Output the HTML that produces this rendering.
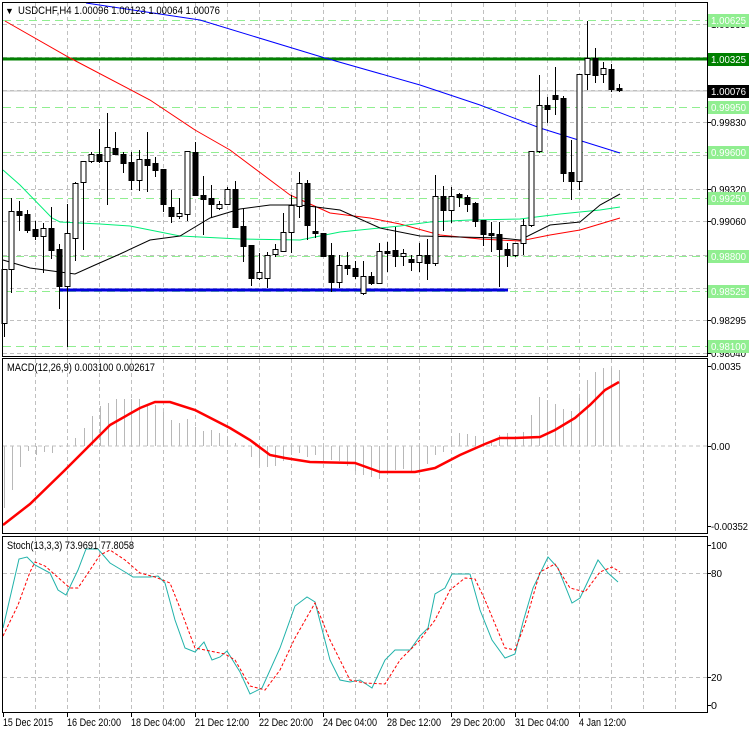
<!DOCTYPE html>
<html><head><meta charset="utf-8"><style>
html,body{margin:0;padding:0;background:#fff;}
svg{display:block;font-family:"Liberation Sans",sans-serif;}
</style></head><body>
<svg id="s" width="749" height="732" viewBox="0 0 749 732" xmlns="http://www.w3.org/2000/svg">
<rect width="749" height="732" fill="#fff"/>
<g id="grid" stroke="#c0c0c0" stroke-width="1" stroke-dasharray="4,3"></g>
<g id="green" stroke="#90ee90" stroke-width="1" stroke-dasharray="8,5"></g>
<line x1="3" y1="59" x2="707" y2="59" stroke="#008000" stroke-width="3"/>
<line x1="3" y1="91" x2="707" y2="91" stroke="#c0c0c0" stroke-width="1"/>
<line x1="60" y1="290" x2="508" y2="290" stroke="#0000dd" stroke-width="3"/>
<g fill="none" stroke-width="1">
<polyline stroke="#0000ff" points="86,3 200,20 325,58 420,85 480,105 540,128 620,153"/>
<polyline stroke="#ff0000" points="5,21 70,58 150,100 195,130 230,150 290,195 310,204 330,213 370,218 400,224 440,235 480,239 520,241 550,235 580,230 620,218"/>
<polyline stroke="#00ee77" points="3,170 20,185 52,218 60,222 100,224 130,226 180,236 240,239 300,240 340,232 400,226 430,222 470,220 520,219 560,214 600,210 620,207"/>
<polyline stroke="#000" points="3,260 30,268 60,272 75,274 95,265 120,254 150,240 180,236 210,218 240,209 270,205 300,205 340,210 380,228 420,236 460,237 500,238 520,240 550,225 580,222 600,205 620,194"/>
</g>
<g id="candles"></g>
<g id="hist" stroke="#b8b8b8" stroke-width="1"></g>
<line x1="3" y1="446" x2="707" y2="446" stroke="#c0c0c0" stroke-dasharray="4,3"/>
<polyline fill="none" stroke="#ff0000" stroke-width="2.5" points="3,525 30,504 65,470 90,445 110,425 140,408 155,402 170,402 195,410 230,428 250,440 270,455 285,458 310,462 355,463 380,472 415,472 435,468 460,455 485,444 500,438 515,438 540,437 555,430 575,418 590,405 605,390 619,382"/>
<polyline fill="none" stroke="#20b2aa" stroke-width="1" points="3,628 19,559 27,557 35,565 50,573 58,590 66,595 78,570 86,549 98,549 110,563 125,572 133,577 150,577 158,576 165,583 175,620 185,648 195,652 204,642 212,660 220,657 227,651 240,672 250,694 262,688 280,648 295,606 307,597 315,602 330,660 340,680 350,682 360,680 372,688 385,660 395,650 410,650 420,636 428,628 435,594 445,588 452,574 470,574 480,610 492,640 505,658 515,654 523,622 533,588 548,557 558,568 572,603 580,598 598,560 608,573 618,582"/>
<polyline fill="none" stroke="#ff0000" stroke-width="1" stroke-dasharray="3,2" points="3,636 18,605 30,572 35,562 45,566 70,588 78,588 100,555 110,550 125,560 140,573 155,577 170,583 180,608 195,648 205,650 225,654 235,660 250,686 265,690 280,670 295,638 315,603 330,640 350,680 365,683 385,684 400,660 420,640 435,620 450,590 465,578 475,579 485,600 505,648 515,650 525,624 540,572 555,564 570,588 585,592 600,572 612,567 620,572"/>
<g fill="none" stroke="#000" stroke-width="1">
<rect x="2.5" y="2.5" width="705" height="354"/>
<rect x="2.5" y="358.5" width="705" height="175"/>
<rect x="2.5" y="536.5" width="705" height="176"/>
</g>
<g id="labels" font-size="10.5"></g>
<g font-size="11" fill="#000">
<text x="5" y="14" font-size="9">▼</text>
<text x="18" y="14" textLength="202" lengthAdjust="spacingAndGlyphs">USDCHF,H4  1.00096 1.00123 1.00064 1.00076</text>
<text x="7" y="371" textLength="148" lengthAdjust="spacingAndGlyphs">MACD(12,26,9) 0.003100 0.002617</text>
<text x="7" y="549" textLength="127" lengthAdjust="spacingAndGlyphs">Stoch(13,3,3) 73.9691 77.8058</text>
</g>
<g font-size="11" fill="#000" id="bottom"></g>
</svg>
<script>
var NS="http://www.w3.org/2000/svg";
function el(p,t,a,txt){var e=document.createElementNS(NS,t);for(var k in a)e.setAttribute(k,a[k]);if(txt!=null)e.textContent=txt;document.getElementById(p).appendChild(e);return e;}
for(var x=35.5;x<707;x+=32){el('grid','line',{x1:x,y1:3,x2:x,y2:356});el('grid','line',{x1:x,y1:359,x2:x,y2:533});el('grid','line',{x1:x,y1:537,x2:x,y2:712});}
[24,57,90,122,155,189,221,255,288,320,353].forEach(function(y){el('grid','line',{x1:3,y1:y+.5,x2:707,y2:y+.5});});
[573,677].forEach(function(y){el('grid','line',{x1:3,y1:y+.5,x2:707,y2:y+.5});});
[20,107,152,198,256,291,346].forEach(function(y){el('green','line',{x1:3,y1:y+.5,x2:707,y2:y+.5});});
var C=[[4,'w',269,323,269,337],[11,'w',211,269,198,293],[19,'b',211,215,201,231],[27,'b',214,230,210,233],[35,'b',229,236,221,240],[43,'w',228,236,223,273],[51,'b',228,250,207,259],[59,'b',249,286,244,309],[67,'w',233,286,204,347],[75,'w',183,238,182,261],[83,'w',161,182,161,250],[91,'w',154,161,152,163],[99,'b',154,161,129,163],[107,'w',147,161,113,205],[115,'b',148,154,132,154],[123,'b',154,163,152,173],[131,'b',162,180,152,190],[139,'w',159,180,150,191],[147,'b',159,165,132,192],[155,'b',163,170,157,177],[163,'b',169,204,169,212],[171,'b',207,216,190,223],[179,'w',213,216,198,219],[187,'w',151,214,151,221],[195,'b',152,195,142,195],[203,'b',195,199,176,235],[211,'b',198,204,185,218],[219,'w',204,208,201,210],[227,'w',189,204,187,205],[235,'b',189,227,181,227],[243,'b',226,246,208,262],[251,'b',245,278,245,286],[259,'w',272,278,253,280],[267,'w',255,278,252,288],[275,'w',249,254,244,257],[283,'w',232,251,213,252],[291,'w',205,232,195,253],[299,'w',183,206,172,218],[307,'b',183,225,180,240],[315,'b',231,233,206,238],[323,'b',233,256,233,257],[331,'b',255,282,243,292],[339,'w',265,282,255,288],[347,'b',265,268,252,275],[355,'b',268,276,261,279],[363,'w',276,293,261,295],[371,'b',276,283,272,285],[379,'w',251,283,243,283],[387,'b',251,252,242,272],[395,'b',250,256,227,267],[403,'w',253,256,249,266],[411,'b',259,262,255,271],[419,'w',255,262,243,272],[427,'b',255,263,239,280],[435,'w',196,263,175,266],[443,'b',196,210,186,231],[451,'w',196,210,187,223],[459,'b',194,197,193,207],[467,'b',197,204,195,212],[475,'b',203,221,202,227],[483,'b',220,234,220,246],[491,'b',233,235,222,252],[499,'b',234,249,222,287],[507,'b',249,255,243,267],[515,'w',243,255,243,257],[523,'w',225,243,219,255],[531,'w',151,225,151,227],[539,'w',105,151,75,153],[547,'b',105,109,97,123],[555,'b',95,99,67,115],[563,'b',98,173,96,182],[571,'b',172,181,140,200],[579,'w',74,181,74,190],[587,'w',58,74,21,90],[595,'b',58,75,48,83],[603,'w',68,74,62,83],[611,'b',69,89,64,92],[619,'b',88,90,84,92]];
C.forEach(function(c){var x=c[0]+.5;el('candles','line',{x1:x,y1:c[4],x2:x,y2:c[5],stroke:'#000'});var h=Math.max(c[3]-c[2],2);el('candles','rect',{x:c[0]-2,y:c[2]+.5,width:5,height:h,fill:c[1]=='w'?'#fff':'#000',stroke:'#000'});});
var H=[[4,508],[12,490],[20,467],[28,451],[36,455],[44,452],[52,453],[60,447],[67,444],[75,438],[84,428],[92,416],[100,406],[108,403],[116,399],[124,399],[131,399],[139,399],[147,404],[155,405],[163,412],[171,420],[179,423],[187,419],[195,427],[203,431],[211,430],[219,433],[227,437],[235,443],[243,447],[251,457],[259,466],[267,467],[275,466],[283,461],[291,455],[299,453],[307,457],[315,455],[323,460],[331,460],[339,461],[347,466],[355,471],[363,475],[371,477],[379,479],[387,474],[395,470],[403,469],[411,471],[419,470],[427,464],[435,455],[443,452],[451,440],[459,433],[467,434],[475,436],[483,440],[491,442],[499,435],[507,433],[515,436],[523,432],[531,415],[539,397],[547,400],[555,404],[563,409],[571,411],[579,398],[587,380],[595,372],[603,368],[611,368],[619,370]];
H.forEach(function(h){el('hist','line',{x1:h[0]+.5,y1:446,x2:h[0]+.5,y2:h[1]});});
[["1.00595",24,35],["0.99830",122,35],["0.99575",155,35],["0.99320",189,35],["0.99060",221,35],["0.98295",320,35],["0.98040",353,35],["0.0035",366,30],["0.00",446,19],["-0.00352",526,37],["100",545,16],["80",573,11],["20",677,11],["0",705,6]].forEach(function(l){el('labels','line',{x1:707,y1:l[1]+.5,x2:711,y2:l[1]+.5,stroke:'#000'});el('labels','text',{x:711,y:l[1]+4,fill:'#000',textLength:l[2],lengthAdjust:'spacingAndGlyphs'},l[0]);});
[["1.00625",20,'#90ee90'],["1.00325",59,'#008000'],["1.00076",91,'#000'],["0.99950",107,'#90ee90'],["0.99600",152,'#90ee90'],["0.99250",198,'#90ee90'],["0.98800",256,'#90ee90'],["0.98525",291,'#90ee90'],["0.98100",346,'#90ee90']].forEach(function(l){el('labels','rect',{x:708,y:l[1]-6,width:41,height:13,fill:l[2]});el('labels','text',{x:711,y:l[1]+4,fill:'#fff',textLength:35,lengthAdjust:'spacingAndGlyphs'},l[0]);});
[["15 Dec 2015",3,50],["16 Dec 20:00",67,54],["18 Dec 04:00",131,54],["21 Dec 12:00",195,54],["22 Dec 20:00",259,54],["24 Dec 04:00",323,54],["28 Dec 12:00",387,54],["29 Dec 20:00",451,54],["31 Dec 04:00",515,54],["4 Jan 12:00",579,47]].forEach(function(l){el('bottom','line',{x1:l[1]+.5,y1:713,x2:l[1]+.5,y2:717,stroke:'#000'});el('bottom','text',{x:l[1],y:726,textLength:l[2],lengthAdjust:'spacingAndGlyphs'},l[0]);});
</script>
</body></html>
